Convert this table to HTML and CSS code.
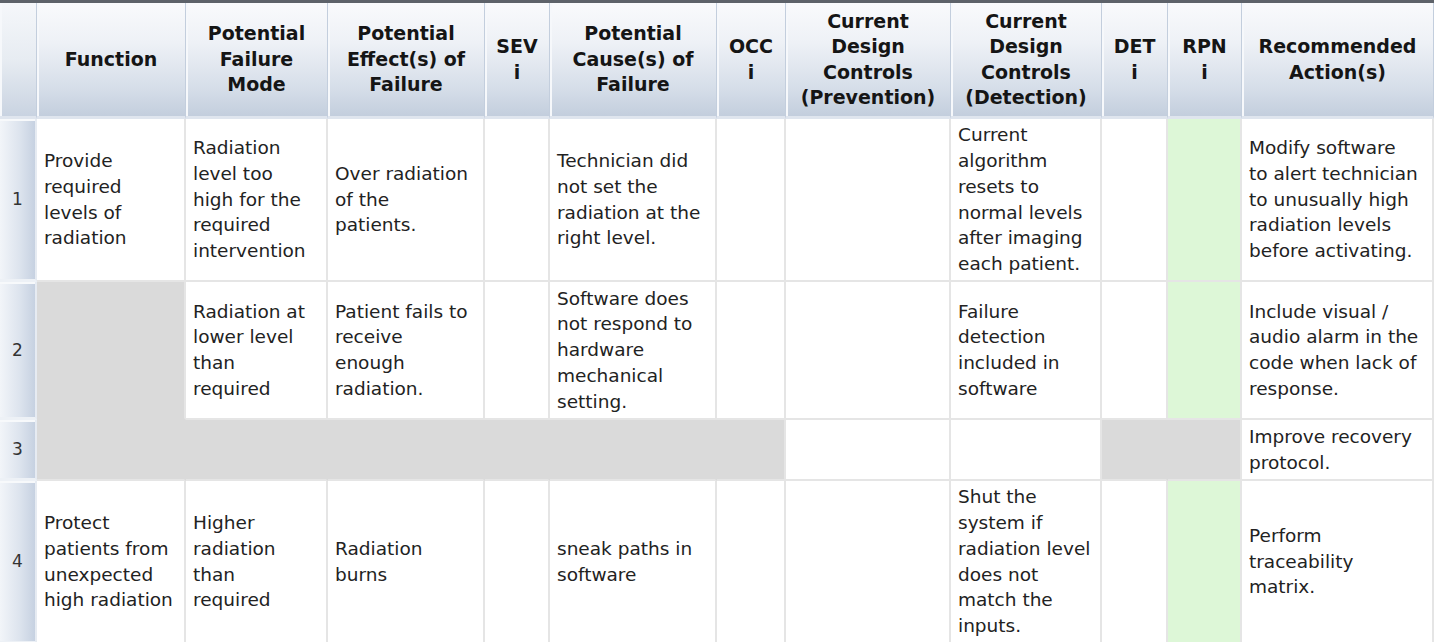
FILE: index.html
```html
<!DOCTYPE html>
<html lang="en">
<head>
<meta charset="utf-8">
<title>FMEA Worksheet</title>
<link rel="stylesheet" href="styles.css">
</head>
<body>
<div class="sheet">
  <div class="h corner"></div>
  <div class="h">Function</div>
  <div class="h">Potential<br>Failure<br>Mode</div>
  <div class="h">Potential<br>Effect(s) of<br>Failure</div>
  <div class="h">SEV<br>i</div>
  <div class="h">Potential<br>Cause(s) of<br>Failure</div>
  <div class="h">OCC<br>i</div>
  <div class="h">Current<br>Design<br>Controls<br>(Prevention)</div>
  <div class="h">Current<br>Design<br>Controls<br>(Detection)</div>
  <div class="h">DET<br>i</div>
  <div class="h">RPN<br>i</div>
  <div class="h">Recommended<br>Action(s)</div>

  <div class="rh">1</div>
  <div class="c">Provide<br>required<br>levels of<br>radiation</div>
  <div class="c">Radiation<br>level too<br>high for the<br>required<br>intervention</div>
  <div class="c">Over radiation<br>of the<br>patients.</div>
  <div class="c"></div>
  <div class="c">Technician did<br>not set the<br>radiation at the<br>right level.</div>
  <div class="c"></div>
  <div class="c"></div>
  <div class="c">Current<br>algorithm<br>resets to<br>normal levels<br>after imaging<br>each patient.</div>
  <div class="c"></div>
  <div class="c grn"></div>
  <div class="c">Modify software<br>to alert technician<br>to unusually high<br>radiation levels<br>before activating.</div>

  <div class="rh">2</div>
  <div class="c g nb"></div>
  <div class="c">Radiation at<br>lower level<br>than<br>required</div>
  <div class="c">Patient fails to<br>receive<br>enough<br>radiation.</div>
  <div class="c"></div>
  <div class="c">Software does<br>not respond to<br>hardware<br>mechanical<br>setting.</div>
  <div class="c"></div>
  <div class="c"></div>
  <div class="c">Failure<br>detection<br>included in<br>software</div>
  <div class="c"></div>
  <div class="c grn"></div>
  <div class="c">Include visual /<br>audio alarm in the<br>code when lack of<br>response.</div>

  <div class="rh">3</div>
  <div class="c g nr"></div>
  <div class="c g nr"></div>
  <div class="c g nr"></div>
  <div class="c g nr"></div>
  <div class="c g nr"></div>
  <div class="c g"></div>
  <div class="c"></div>
  <div class="c"></div>
  <div class="c g nr"></div>
  <div class="c g"></div>
  <div class="c">Improve recovery<br>protocol.</div>

  <div class="rh">4</div>
  <div class="c">Protect<br>patients from<br>unexpected<br>high radiation</div>
  <div class="c">Higher<br>radiation<br>than<br>required</div>
  <div class="c">Radiation<br>burns</div>
  <div class="c"></div>
  <div class="c">sneak paths in<br>software</div>
  <div class="c"></div>
  <div class="c"></div>
  <div class="c">Shut the<br>system if<br>radiation level<br>does not<br>match the<br>inputs.</div>
  <div class="c"></div>
  <div class="c grn"></div>
  <div class="c">Perform<br>traceability<br>matrix.</div>
</div>
</body>
</html>
```
FILE: styles.css
```css
* { box-sizing: border-box; }
html, body { margin: 0; padding: 0; background: #ffffff; overflow: hidden; }
body { font-family: "DejaVu Sans", "Verdana", sans-serif; }

.sheet {
  width: 1434px;
  border-top: 3px solid #5d6269;
  display: grid;
  grid-template-columns: 37px 149px 142px 157px 65px 167px 69px 165px 151px 66px 74px 192px;
  grid-template-rows: 116px 163px 138px 61px 163px;
}

.h {
  display: flex;
  align-items: center;
  justify-content: center;
  text-align: center;
  font-weight: bold;
  font-size: 19px;
  line-height: 25.5px;
  color: #151515;
  white-space: nowrap;
  background: linear-gradient(to bottom, #f9fafc 0%, #eef1f6 35%, #d6dee9 75%, #c3cedd 100%);
  border-right: 1px solid #c3cedd;
  border-bottom: 3px solid #dfe5ee;
  box-shadow: inset 2px 0 0 #f6f8fb;
}
.h.corner {
  background: linear-gradient(to bottom, #f5f7fa 0%, #e7ecf2 50%, #c9d3e1 100%);
}

.rh {
  display: flex;
  align-items: center;
  justify-content: center;
  font-size: 17px;
  color: #333;
  background: linear-gradient(to right, #f2f5f9 0%, #dde4ee 55%, #c6d1e1 100%);
  border-right: 2px solid #e6ebf2;
  border-bottom: 3px solid #edf1f6;
  box-shadow: inset 0 2px 0 #f7f9fb;
}

.c {
  display: flex;
  align-items: center;
  padding: 0 4px 0 7px;
  font-size: 18.5px;
  line-height: 25.7px;
  color: #222;
  white-space: nowrap;
  overflow: hidden;
  background: #ffffff;
  border-right: 2px solid #e5e5e5;
  border-bottom: 2px solid #e5e5e5;
}

.g { background: #dadada; }
.g.nr { border-right-color: #dadada; }
.g.nb { border-bottom-color: #dadada; }
.grn { background: #ddf7d7; }
```
